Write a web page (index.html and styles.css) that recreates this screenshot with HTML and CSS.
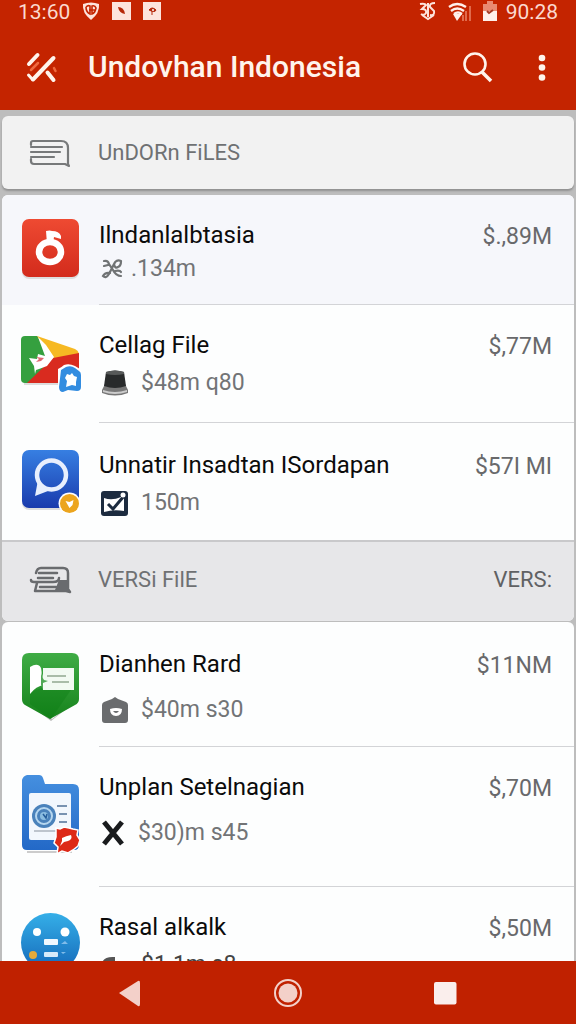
FILE: index.html
```html
<!DOCTYPE html>
<html lang="id">
<head>
<meta charset="utf-8">
<meta name="viewport" content="width=device-width, initial-scale=1">
<title>Undovhan Indonesia</title>
<link rel="stylesheet" href="styles.css">
</head>
<body>
<div class="screen">
  <header class="top">
    <div class="status">
      <span class="status-time">13:60</span>
      <svg class="status-shield" width="18" height="20" viewBox="0 0 18 20"><path d="M1 3Q9 0 17 3Q18 12 9 19Q0 12 1 3Z" fill="#fde4dc"/><path d="M4 6q2-2 4-1v8q-4-2-4-7M10 5q3-1 4 2-1 5-4 6zM7 9h6" fill="none" stroke="#c42400" stroke-width="1.6"/></svg>
      <svg width="19" height="18" viewBox="0 0 19 18"><path fill="#fde4dc" d="M0 0h19v18H0z"/><path d="M6 5q6 0 7 7-6-1-7-7z" fill="#b52708"/></svg>
      <svg width="18" height="18" viewBox="0 0 18 18"><path fill="#fde4dc" d="M0 0h18v18H0z"/><path d="M6 8q3-4 7 0-1 3-7 0zM9 9v4" fill="#b52708" stroke="#b52708"/><circle cx="10" cy="8" r="1" fill="#fff"/></svg>
      <span class="status-space"></span>
      <svg width="17" height="20" viewBox="0 0 17 20" fill="none" stroke="#fde4dc" stroke-width="2"><path d="M1 3q5-1 6 1l-4 4q5 0 4 4-2 3-5 1M16 2q-6 0-5 4l4 4q1 5-4 4M9 2v14M3 14l6 4 6-4"/></svg>
      <svg class="status-wifi" width="23" height="19" viewBox="0 0 23 19" fill="none"><path d="M1 5q8-6 17 0M3 9q6-5 13 0M6 12q4-3 8 0" stroke="#fff0eb" stroke-width="2.3"/><path d="M5 12h9l-5 7z" fill="#fff0eb"/><path d="M15 19v-6M18 19V9M22 19V4" stroke="#e06a4c" stroke-width="2"/></svg>
      <svg class="status-battery" width="14" height="20" viewBox="0 0 14 20"><path d="M0 3h4V0h6v3h4v8H0z" fill="#e98a72"/><path d="M0 10h14v10H0z" fill="#fff0eb"/><path d="M4 10l2 2 4-3" stroke="#a63922" fill="none" stroke-width="2"/></svg>
      <span>90:28</span>
    </div>
    <div class="appbar">
      <svg class="logo" width="32" height="32" viewBox="0 0 32 32" fill="none" stroke-linecap="round"><path d="M5 19L12 12M28 17l1.500 3" stroke="#ee6a40" stroke-width="2.500"/><path d="M3 13L11.500 4M7 28.500L27.500 7M21.500 21.500l6 7.500" stroke="#fff4ec" stroke-width="4"/><path d="M2.500 24l4 4.500" stroke="#fff4ec" stroke-width="3"/></svg>
      <h1>Undovhan Indonesia</h1>
      <button class="bar-button" aria-label="Cari"><svg width="32" height="32" viewBox="0 0 32 32" fill="none" stroke="#fff4ec"><circle cx="13" cy="13" r="10.500" stroke-width="2.600"/><path d="M20 21l9 9" stroke-width="3.500"/></svg></button>
      <button class="bar-button more" aria-label="Menu"><svg width="8" height="28" viewBox="0 0 8 28" fill="#fff4ec"><circle cx="4" cy="5" r="3.300"/><circle cx="4" cy="14.500" r="3.300"/><circle cx="4" cy="24.500" r="3.300"/></svg></button>
    </div>
  </header>

  <main class="content">
    <section class="section-head section-card">
      <svg class="section-icon" width="48" height="32" viewBox="0 0 48 32" fill="none" stroke="#77797a" stroke-width="2.200" stroke-linecap="round" stroke-linejoin="round"><path d="M5 8V6q0-2 2-2h28q7 0 7 7v16l1 2-4-2H8q-3 0-3-3v-2M5 10h31M5 15h29M5 20h23"/></svg>
      <h2>UnDORn FiLES</h2>
    </section>

    <ul class="card list">
      <li class="entry tinted tight">
        <svg class="entry-icon" width="64" height="84" viewBox="0 0 64 84"><defs><linearGradient id="red" x2="0" y2="1"><stop stop-color="#ee4a32"/><stop offset="1" stop-color="#d32b1c"/></linearGradient></defs><rect x="3" y="2" width="57" height="58" rx="7" fill="#ddd"/><rect x="3" y="0" width="57" height="58" rx="7" fill="url(#red)"/><ellipse cx="31" cy="33" rx="11" ry="10" fill="none" stroke="#fff" stroke-width="6.500"/><path d="M28 25l-1-13q4-1 6 0 7 0 9 5v3l-7-2-1 7z" fill="#fff"/></svg>
        <div class="entry-body"><div class="entry-text"><h3>Ilndanlalbtasia</h3><p class="meta close"><svg width="22" height="24" viewBox="0 0 22 24" fill="none" stroke="#707374" stroke-width="2.200" stroke-linecap="round"><path d="M3 4q4-1 5 3l4 6q3 6 8 6M20 4q-5-2-7 3L8 17q-3 5-6 2 2-4 7-3M13 7q1 5 4 3 3-1 3-6M3 9l4-1M14 14q5-1 6 1"/></svg><span>.134m</span></p></div><span class="price">$.,89M</span></div>
      </li>
      <li class="entry">
        <svg class="entry-icon" width="64" height="84" viewBox="0 0 64 84"><path d="M5 53h36v3H5z" fill="#ddd"/><path d="M6 7h12l32 26-23 21H6q-4 0-4-4V11q0-4 4-4z" fill="#35a03f"/><path d="M18 7l38 13q4 2 4 6L34 33z" fill="#f6b923"/><path d="M60 24v26q0 4-4 4H8l26-25z" fill="#d92b1f"/><path d="M19 8l8 8 8 12-7 9-8 3-3 1-1 4-1-8-5-8 8 1 1-5 7 2z" fill="#fff"/><path d="M17 28l8 1-3 3-5 1 3-3z" fill="#df6871"/><path d="M39 40q4-2 6-4 5-2 11 1l5 3 2 3v18l-3 3H41q-3-1-2-4z" fill="#fff"/><path d="M42 41l5-3q5-2 9 1l4 3q2 1 2 4v12q0 4-4 4l-9-1-5 2q-4 0-4-5z" fill="#338de0"/><path d="M48 45l3 1 2-2 2 3 3 1-1 5v4l-4-1-6 2 1-6-2-3z" fill="#fff"/></svg>
        <div class="entry-body"><div class="entry-text"><h3>Cellag File</h3><p class="meta"><svg width="28" height="28" viewBox="0 0 28 28"><path d="M4 15h20l3 6v3q-13 5-26 0v-3z" fill="#777"/><path d="M2 21q12 4 24 0v2q-12 4-24 0z" fill="#ccc"/><path d="M5 3q9-3 18 0l2 14q-11 4-22 0z" fill="#282a2b"/><path d="M5 3q9-3 18 0v2q-9 2-18 0z" fill="#575959"/></svg><span>$48m q80</span></p></div><span class="price">$,77M</span></div>
      </li>
      <li class="entry flush">
        <svg class="entry-icon" width="64" height="84" viewBox="0 0 64 84"><defs><linearGradient id="blue" x2="0" y2="1"><stop stop-color="#377fe2"/><stop offset="1" stop-color="#1a3bad"/></linearGradient></defs><rect x="3" y="5" width="57" height="58" rx="7" fill="#ddd"/><rect x="3" y="3" width="57" height="58" rx="7" fill="url(#blue)"/><circle cx="32.500" cy="28" r="14.500" fill="none" stroke="#e8effd" stroke-width="4.500"/><path d="M19 33l-3 16 13-5-6-5z" fill="#e8effd"/><circle cx="50.500" cy="56.500" r="11" fill="#fff"/><circle cx="50.500" cy="56.500" r="9.500" fill="#eca51e"/><path d="M46.500 54l4 1 4-2-1 5-3 3z" fill="#fff"/></svg>
        <div class="entry-body"><div class="entry-text"><h3>Unnatir Insadtan ISordapan</h3><p class="meta"><svg width="28" height="28" viewBox="0 0 28 28"><rect x="0" y="2" width="27" height="25" rx="3" fill="#1c2b3f"/><path d="M3 9q8 3 17-1l3 1v13q-10-2-20 1z" fill="#fff"/><path d="M7 15l5 5L23 7" fill="none" stroke="#1c2b3f" stroke-width="3"/><circle cx="22" cy="6" r="2.500" fill="#fff"/></svg><span>150m</span></p></div><span class="price">$57I MI</span></div>
      </li>
      <li class="section-head section-inline">
        <svg class="section-icon" width="48" height="32" viewBox="0 0 48 32" fill="none" stroke="#696b6e" stroke-width="2.500" stroke-linecap="round" stroke-linejoin="round"><path d="M10 9q1-5 5-5h22q5 0 5 5v16l2 3-4-1H9l2-8M5 16q0 2 3 2h19q6 0 6-4M13 9h18M12 14h15M14 23h16"/><path d="M33 16h8v10H29z" fill="#696b6e" stroke="none"/></svg>
        <h2>VERSi FilE</h2><span class="section-value">VERS:</span>
      </li>
    </ul>

    <ul class="card list">
      <li class="entry wide">
        <svg class="entry-icon" width="64" height="84" viewBox="0 0 64 84"><defs><linearGradient id="green" x2="0" y2="1"><stop stop-color="#3fac45"/><stop offset="1" stop-color="#17831c"/></linearGradient></defs><path d="M3 53l29 22 28-22-27 20z" fill="#bbb"/><path d="M10 7h43q7 0 7 7v39q0 4-4 6L31 73 6 59q-3-2-3-6V14q0-7 7-7z" fill="url(#green)"/><path d="M11 46l15-5h28L32 73 11 58z" fill="#087a12" opacity=".35"/><path d="M24 22h31v22H24z" fill="#f2faf2"/><path d="M11 21q8-5 11 1l3 17q-8 1-14 9z" fill="#fff"/><path d="M22 22q0 8 3 12l4 1-5 2v7l-2-5z" fill="#51a856"/><path d="M28 30h19M33 36h17" stroke="#91a890" stroke-width="1.500"/></svg>
        <div class="entry-body"><div class="entry-text"><h3>Dianhen Rard</h3><p class="meta"><svg width="28" height="28" viewBox="0 0 28 28"><path d="M3 6l8-3 3-2 3 2 8 3q2 1 2 3v15q0 3-3 3H4q-3 0-3-3V9q0-2 2-3z" fill="#6a6c6e"/><path d="M9 13q6-2 12 0 0 7-6 7t-6-7z" fill="#fff"/><path d="M12 15h6q-3 4-6 0z" fill="#6a6c6e"/></svg><span>$40m s30</span></p></div><span class="price">$11NM</span></div>
      </li>
      <li class="entry tall">
        <svg class="entry-icon" width="64" height="84" viewBox="0 0 64 84"><defs><linearGradient id="folder" x2="0" y2="1"><stop stop-color="#458fdf"/><stop offset="1" stop-color="#2369c7"/></linearGradient></defs><path d="M8 80h45v2H8z" fill="#ccc"/><path d="M3 9q1-4 5-5h12q3 0 4 3l2 6h28q6 0 6 6v55q0 5-5 5H8q-5 0-5-5z" fill="url(#folder)"/><rect x="10" y="22" width="42" height="47" rx="2" fill="#f2f7fd"/><circle cx="25" cy="45" r="12" fill="#4a82bb"/><circle cx="25" cy="45" r="8" fill="none" stroke="#b5d6ef" stroke-width="2"/><circle cx="25" cy="45" r="4" fill="#8abce0"/><path d="M24 43l3 4 1-4" fill="none" stroke="#265e9b" stroke-width="1.500"/><path d="M38 35h10M40 43h8M40 51h8" stroke="#7892b1" stroke-width="2"/><path d="M15 60h22" stroke="#bdc4cd" stroke-width="2"/><path d="M37 57l4 1 4-2 5 1 4 1 5 1-1 5 3 5-2 6-5 4-5 3-6-2-5 3 1-7-4-4 2-6z" fill="#dd2918" stroke="#fff" stroke-width="1.500"/><path d="M43 67q4-2 9-3 2 4-3 6l-4 1-4 4 2-5z" fill="#fff"/></svg>
        <div class="entry-body"><div class="entry-text"><h3>Unplan Setelnagian</h3><p class="meta"><svg width="25" height="28" viewBox="0 0 25 28" stroke="#191b1d" stroke-width="5"><path d="M3 3l18 22M21 3L3 25"/></svg><span>$30)m s45</span></p></div><span class="price">$,70M</span></div>
      </li>
      <li class="entry">
        <svg class="entry-icon" width="64" height="84" viewBox="0 0 64 84"><defs><linearGradient id="sky" x2="0" y2="1"><stop stop-color="#35afe8"/><stop offset="1" stop-color="#1467b8"/></linearGradient></defs><circle cx="31.500" cy="31.500" r="29.500" fill="url(#sky)"/><circle cx="18" cy="21" r="4" fill="#fff"/><circle cx="46" cy="21" r="4.500" fill="#fff"/><rect x="25" y="28" width="14" height="6" rx="1" fill="#f0f8ff"/><rect x="25" y="41" width="14" height="5" rx="1" fill="#d7eafa"/><path d="M42 33l4-3 3 3zM42 41h5l-3 2z" fill="#80bcea"/><circle cx="14" cy="44" r="4" fill="#e6aa3a"/></svg>
        <div class="entry-body"><div class="entry-text"><h3>Rasal alkalk</h3><p class="meta dark"><svg width="28" height="28" viewBox="0 0 28 28"><path d="M1 12q2-7 13-6v18H3z" fill="#555"/></svg><span>$1.1m s8</span></p></div><span class="price">$,50M</span></div>
      </li>
    </ul>
  </main>

  <nav class="navbar" aria-label="Sistem">
    <button aria-label="Kembali"><svg width="30" height="30" viewBox="0 0 30 30"><path d="M3 15L22 3q2-1 2 2v21q0 3-2 2z" fill="#f3d0c9"/></svg></button>
    <button aria-label="Beranda"><svg width="30" height="30" viewBox="0 0 30 30"><circle cx="15" cy="15" r="13" fill="none" stroke="#f3d0c9" stroke-width="2"/><circle cx="15" cy="15" r="9.500" fill="#f3d0c9"/></svg></button>
    <button aria-label="Terkini"><svg width="30" height="30" viewBox="0 0 30 30"><rect x="4" y="4" width="22.500" height="22.500" rx="2" fill="#faeeec"/></svg></button>
  </nav>
</div>
</body>
</html>
```

FILE: styles.css
```css
* { box-sizing: border-box; }

body {
  margin: 0;
  background: #bdbdbd;
  font-family: Roboto, "Liberation Sans", sans-serif;
  color: #0b0b0b;
}

h1, h2, h3, p, ul { margin: 0; padding: 0; }
ul { list-style: none; }
svg { display: block; flex: none; }
button { border: 0; padding: 0; background: none; cursor: pointer; }

.screen {
  display: flex;
  flex-direction: column;
  height: 100vh;
}

.top {
  flex: none;
  background: #c42400;
  color: #fff4ec;
}

.status {
  display: flex;
  align-items: center;
  gap: 12px;
  height: 24px;
  padding: 0 18px;
  font-size: 21px;
  line-height: 24px;
  color: #fbd9cf;
}
.status-space { flex: 1; }
.status svg { margin-bottom: 2px; }
.status-battery + span { margin-left: -3px; }

.appbar {
  display: flex;
  align-items: center;
  height: 86px;
  padding: 0 22px 0 26px;
}
.appbar h1 {
  flex: 1;
  margin-left: 30px;
  font-size: 30px;
  line-height: 40px;
  font-weight: 500;
  white-space: nowrap;
}
.bar-button { display: grid; place-items: center; height: 48px; }
.bar-button.more { width: 24px; margin-left: 36px; }

.content {
  flex: 1;
  min-height: 0;
  overflow: hidden;
  padding: 6px 2px 0;
}

.section-head {
  display: flex;
  align-items: center;
  padding: 0 22px 0 24px;
  color: #6f7173;
}
.section-icon { margin-right: 24px; }
.section-head h2 {
  flex: 1;
  font-size: 22px;
  line-height: 28px;
  font-weight: 400;
}
.section-card {
  height: 73px;
  margin-bottom: 6px;
  border-radius: 6px;
  background: #f2f2f2;
  box-shadow: 0 2px 2px #929292;
}
.section-inline {
  height: 81px;
  padding-bottom: 4px;
  border-top: 2px solid #c9c9cb;
  border-radius: 0 0 6px 6px;
  background: #e7e7e9;
}
.section-value { font-size: 22px; color: #606163; }

.card {
  border-radius: 6px;
  background: #fdfefe;
}
.card + .card { margin-top: 1px; }

.entry { display: flex; padding-left: 17px; }
.entry-icon { height: 84px; margin: 24px 16px -10px 0; }
.entry-body {
  flex: 1;
  display: flex;
  justify-content: space-between;
  padding: 24px 22px 25px 0;
  border-bottom: 1px solid #d3d4d7;
}
.entry h3 {
  font-size: 24px;
  line-height: 32px;
  font-weight: 400;
}
.price {
  font-size: 23px;
  line-height: 36px;
  color: #68696b;
}
.meta {
  display: flex;
  align-items: center;
  gap: 12px;
  margin-top: 8px;
  padding-left: 2px;
  height: 28px;
  font-size: 23px;
  line-height: 28px;
  color: #727476;
}
.meta.close { gap: 8px; }
.meta.dark { color: #444; }

.tinted { border-radius: 6px 6px 0 0; background: #f6f7fb; }
.tight .entry-body { padding-bottom: 21px; }
.tight .meta { margin-top: 4px; }
.flush .entry-body { padding-top: 26px; padding-bottom: 23px; border-bottom: 0; }
.wide .entry-body { padding-top: 26px; padding-bottom: 22px; }
.wide .meta { margin-top: 16px; }
.tall .entry-body { padding-bottom: 39px; }
.tall .meta { margin-top: 16px; }

.navbar {
  flex: none;
  display: grid;
  grid-template-columns: repeat(3, 1fr);
  height: 63px;
  padding: 0 9%;
  background: #c02100;
}
.navbar button { display: grid; place-items: center; }
```
